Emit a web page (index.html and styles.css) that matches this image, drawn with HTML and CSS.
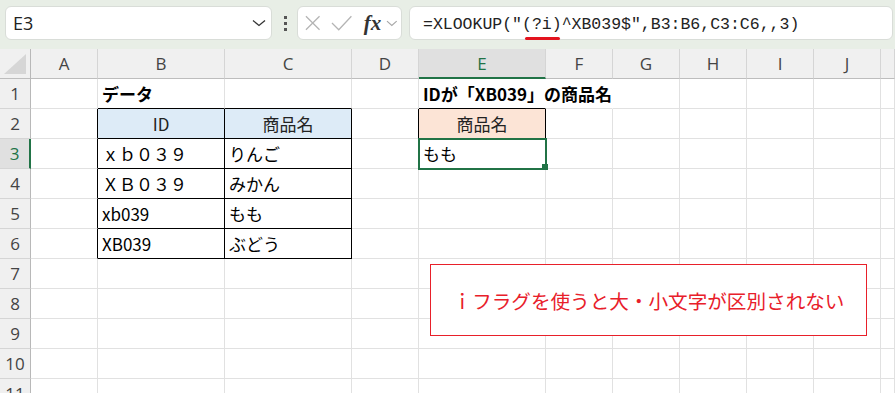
FILE: index.html
```html
<!DOCTYPE html>
<html lang="ja">
<head>
    <meta charset="UTF-8">
    <title>XLOOKUP 正規表現</title>
    <link rel="stylesheet" href="styles.css">
</head>
<body>

<div class="toolbar">
    <div class="namebox">
        <span class="cellref">E3</span>
        <svg class="chev" width="14" height="8" viewBox="0 0 14 8"><path d="M1 1.5 L7 6.5 L13 1.5" fill="none" stroke="#333" stroke-width="1.3"/></svg>
    </div>
    <div class="dots"><i></i><i></i><i></i></div>
    <div class="fxbox">
        <svg width="18" height="16" viewBox="0 0 18 16"><path d="M2 1 L16 15 M16 1 L2 15" stroke="#b4b4b4" stroke-width="1.3" fill="none"/></svg>
        <svg width="22" height="16" viewBox="0 0 22 16"><path d="M1 8 L8 15 L21 1" stroke="#b4b4b4" stroke-width="1.3" fill="none"/></svg>
        <span class="fx">fx</span>
        <svg class="smallchev" width="12" height="7" viewBox="0 0 12 7"><path d="M1 1 L6 5.5 L11 1" fill="none" stroke="#a8a8a8" stroke-width="1.2"/></svg>
    </div>
    <div class="formula">=XLOOKUP("<span class="mark">(?i)</span>^XB039$",B3:B6,C3:C6,,3)</div>
</div>

<div class="sheet">
    <!-- header -->
    <div class="corner"><svg width="22" height="20" viewBox="0 0 22 20"><polygon points="0,20 22,20 22,0" fill="#d6d6d6"/></svg></div>
    <div class="ch">A</div><div class="ch">B</div><div class="ch">C</div><div class="ch">D</div>
    <div class="ch sel">E</div><div class="ch">F</div><div class="ch">G</div><div class="ch">H</div>
    <div class="ch">I</div><div class="ch">J</div><div class="ch"></div>

    <!-- 1 -->
    <div class="rh">1</div>
    <div class="c"></div><div class="c bb bold">データ</div><div class="c bb"></div><div class="c"></div>
    <div class="c bb bold ov">IDが「XB039」の商品名</div><div class="c ov"></div><div class="c"></div><div class="c"></div>
    <div class="c"></div><div class="c"></div><div class="c"></div>

    <!-- 2 -->
    <div class="rh">2</div>
    <div class="c br"></div><div class="c bx blue mid">ID</div><div class="c bx blue mid">商品名</div><div class="c br"></div>
    <div class="c bx peach mid">商品名</div><div class="c"></div><div class="c"></div><div class="c"></div>
    <div class="c"></div><div class="c"></div><div class="c"></div>

    <!-- 3 -->
    <div class="rh sel">3</div>
    <div class="c br"></div><div class="c bx">ｘｂ０３９</div><div class="c bx">りんご</div><div class="c"></div>
    <div class="c active">もも</div><div class="c"></div><div class="c"></div><div class="c"></div>
    <div class="c"></div><div class="c"></div><div class="c"></div>

    <!-- 4 -->
    <div class="rh">4</div>
    <div class="c br"></div><div class="c bx">ＸＢ０３９</div><div class="c bx">みかん</div><div class="c"></div>
    <div class="c"></div><div class="c"></div><div class="c"></div><div class="c"></div>
    <div class="c"></div><div class="c"></div><div class="c"></div>

    <!-- 5 -->
    <div class="rh">5</div>
    <div class="c br"></div><div class="c bx">xb039</div><div class="c bx">もも</div><div class="c"></div>
    <div class="c"></div><div class="c"></div><div class="c"></div><div class="c"></div>
    <div class="c"></div><div class="c"></div><div class="c"></div>

    <!-- 6 -->
    <div class="rh">6</div>
    <div class="c br"></div><div class="c bx">XB039</div><div class="c bx">ぶどう</div><div class="c"></div>
    <div class="c"></div><div class="c"></div><div class="c"></div><div class="c"></div>
    <div class="c"></div><div class="c"></div><div class="c"></div>

    <!-- 7-11 -->
    <div class="rh">7</div>
    <div class="c"></div><div class="c"></div><div class="c"></div><div class="c"></div><div class="c"></div>
    <div class="c"></div><div class="c"></div><div class="c"></div><div class="c"></div><div class="c"></div><div class="c"></div>

    <div class="rh">8</div>
    <div class="c"></div><div class="c"></div><div class="c"></div><div class="c"></div><div class="c"></div>
    <div class="c"></div><div class="c"></div><div class="c"></div><div class="c"></div><div class="c"></div><div class="c"></div>

    <div class="rh">9</div>
    <div class="c"></div><div class="c"></div><div class="c"></div><div class="c"></div><div class="c"></div>
    <div class="c"></div><div class="c"></div><div class="c"></div><div class="c"></div><div class="c"></div><div class="c"></div>

    <div class="rh">10</div>
    <div class="c"></div><div class="c"></div><div class="c"></div><div class="c"></div><div class="c"></div>
    <div class="c"></div><div class="c"></div><div class="c"></div><div class="c"></div><div class="c"></div><div class="c"></div>

    <div class="rh">11</div>
    <div class="c"></div><div class="c"></div><div class="c"></div><div class="c"></div><div class="c"></div>
    <div class="c"></div><div class="c"></div><div class="c"></div><div class="c"></div><div class="c"></div><div class="c"></div>

    <!-- 図形（テキストボックス） -->
    <div class="note">ｉフラグを使うと大・小文字が区別されない</div>
</div>

</body>
</html>
```

FILE: styles.css
```css
body {
    margin: 0;
    width: 895px;
    height: 393px;
    overflow: hidden;
    background-color: #fff;
    font-family: "Open Sans", "Noto Sans", sans-serif;
}
.toolbar {
    display: flex;
    align-items: center;
    height: 49px;
    padding: 0 2px 3px 5px;
    box-sizing: border-box;
    background-color: #e8eee6;
}
.namebox,
.fxbox,
.formula {
    display: flex;
    align-items: center;
    height: 34px;
    box-sizing: border-box;
    background-color: #fff;
    border: 1px solid #d9ddd8;
    border-radius: 6px;
}
.namebox {
    width: 267px;
    padding: 0 5px 0 7px;
    justify-content: space-between;
}
.cellref {
    font-size: 18px;
    color: #222;
}
.dots {
    display: flex;
    flex-direction: column;
    gap: 3px;
    margin: 0 10px 0 12px;
}
.dots i {
    display: block;
    width: 3px;
    height: 3px;
    background-color: #555;
}
.fxbox {
    width: 105px;
    padding: 0 3px 0 6px;
    gap: 10px;
}
.fx {
    font-family: "Liberation Serif", serif;
    font-style: italic;
    font-weight: bold;
    font-size: 21px;
    color: #333;
    margin-left: 1px;
    margin-right: -5px;
}
.formula {
    flex: 1;
    margin-left: 7px;
    padding: 2px 0 0 13px;
    font-family: "Liberation Mono", monospace;
    font-size: 16.5px;
    color: #222;
    white-space: nowrap;
}
.mark {
    position: relative;
}
.mark::after {
    content: "";
    position: absolute;
    left: 3px;
    right: 2px;
    bottom: -6px;
    height: 3px;
    border-radius: 2px;
    background-color: #e3131e;
}

.sheet {
    position: relative;
    display: grid;
    grid-template-columns: 31px 67px 127px 127px 67px 127px 67px 67px 67px 67px 67px 1fr;
    grid-auto-rows: 30px;
}
.corner,
.ch,
.rh,
.c {
    box-sizing: border-box;
    display: flex;
    align-items: center;
    white-space: nowrap;
}
.corner {
    background-color: #f0f0f0;
    border-right: 1px solid #b8b8b8;
    border-bottom: 1px solid #bdbdbd;
    align-items: flex-end;
    justify-content: flex-end;
    padding: 0 4px 4px 0;
}
.ch {
    justify-content: center;
    background-color: #f0f0f0;
    border-right: 1px solid #d5d5d5;
    border-bottom: 1px solid #bdbdbd;
    font-size: 17px;
    color: #444;
}
.ch.sel {
    background-color: #e0e0e0;
    color: #217346;
    border-bottom: 2px solid #217346;
}
.rh {
    justify-content: center;
    background-color: #f0f0f0;
    border-right: 1px solid #b8b8b8;
    border-bottom: 1px solid #d5d5d5;
    font-size: 17px;
    color: #444;
}
.rh.sel {
    background-color: #e0e0e0;
    color: #217346;
    border-right: 2px solid #217346;
}
.c {
    padding: 0 4px;
    border-right: 1px solid #e1e1e1;
    border-bottom: 1px solid #e1e1e1;
    font-family: "Noto Sans CJK JP", sans-serif;
    font-size: 17px;
    color: #000;
}
.bold {
    font-weight: bold;
}
.mid {
    justify-content: center;
    color: #222;
}
.ov {
    border-right-color: transparent;
}
.bb {
    border-bottom-color: #000;
}
.br {
    border-right-color: #000;
}
.bx {
    border-right-color: #000;
    border-bottom-color: #000;
}
.blue {
    background-color: #ddebf7;
}
.peach {
    background-color: #fce4d6;
}
.active {
    position: relative;
    z-index: 1;
    outline: 2px solid #217346;
    outline-offset: -1px;
}
.active::after {
    content: "";
    position: absolute;
    right: -3px;
    bottom: -2px;
    width: 6px;
    height: 6px;
    background-color: #217346;
}
.note {
    position: absolute;
    left: 430px;
    top: 215px;
    width: 437px;
    height: 72px;
    box-sizing: border-box;
    display: flex;
    align-items: center;
    justify-content: center;
    background-color: #fff;
    border: 1px solid #e8202a;
    font-family: "Noto Sans CJK JP", sans-serif;
    font-size: 19.6px;
    color: #e8202a;
    z-index: 2;
}
```
